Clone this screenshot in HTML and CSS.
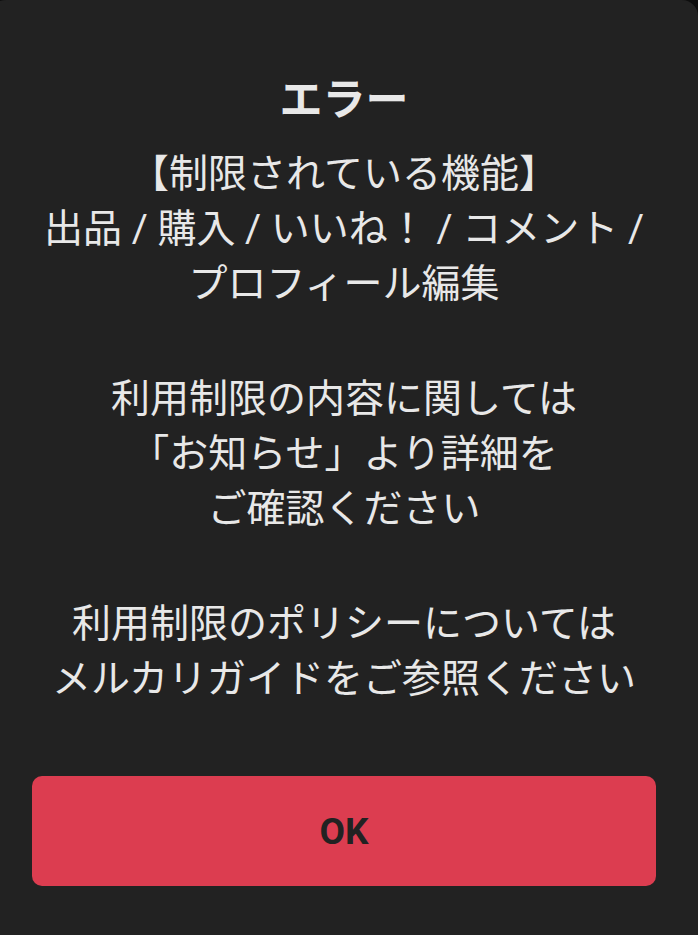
FILE: index.html
```html
<!DOCTYPE html>
<html lang="ja">
<head>
  <meta charset="UTF-8">
  <meta name="viewport" content="width=device-width, initial-scale=1.0">
  <title>エラー</title>
  <link rel="stylesheet" href="styles.css">
</head>
<body>
  <div class="dialog">
    <h2 class="dialog-title">エラー</h2>

    <div class="dialog-message">
      <p>【制限されている機能】<br>出品 / 購入 / いいね！ / コメント /<br>プロフィール編集</p>
      <p>利用制限の内容に関しては<br>「お知らせ」より詳細を<br>ご確認ください</p>
      <p>利用制限のポリシーについては<br>メルカリガイドをご参照ください</p>
    </div>

    <button class="ok-button" type="button">OK</button>
  </div>
</body>
</html>
```

FILE: styles.css
```css
html,
body {
  margin: 0;
  padding: 0;
  height: 100%;
}

body {
  background: #0e0e0e;
  font-family: Roboto, "Noto Sans CJK JP", sans-serif;
  overflow: hidden;
}

.dialog {
  background-color: #222222;
  width: 708px;
  margin-left: -10px;
  min-height: 100%;
  box-sizing: border-box;
  padding: 68px 42px 48px;
  border-radius: 16px 16px 0 0;
  display: flex;
  flex-direction: column;
  align-items: stretch;
}

.dialog-title {
  margin: 0;
  color: #e8e8e8;
  font-family: "Noto Sans CJK JP", sans-serif;
  font-size: 43px;
  font-weight: bold;
  line-height: 56px;
  text-align: center;
}

.dialog-message {
  margin-top: 23px;
  color: #e8e8e8;
  font-size: 39px;
  line-height: 55px;
  text-align: center;
}

.dialog-message p {
  margin: 0 0 60px;
}

.dialog-message p:last-child {
  margin-bottom: 0;
}

.ok-button {
  margin-top: 69px;
  height: 110px;
  border: none;
  border-radius: 10px;
  background-color: #dc3d50;
  color: #222222;
  font-family: Roboto, "Noto Sans", sans-serif;
  font-size: 37px;
  font-weight: bold;
  cursor: pointer;
}
```
